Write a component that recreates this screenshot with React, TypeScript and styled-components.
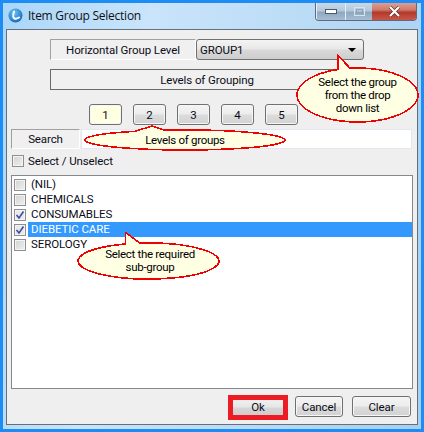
import React from "react";
import styled, { createGlobalStyle } from "styled-components";

const GlobalStyle = createGlobalStyle`
  html, body {
    margin: 0;
    padding: 0;
    background: #fff;
  }
  body {
    font-family: Roboto, "Liberation Sans", Arial, sans-serif;
    font-size: 11.5px;
    letter-spacing: -0.1px;
    color: #0c0c18;
  }
`;

const Stage = styled.div`
  position: relative;
  width: 424px;
  height: 432px;
  overflow: hidden;
`;

const Window = styled.div`
  box-sizing: border-box;
  width: 424px;
  height: 432px;
  display: flex;
  flex-direction: column;
  border: 3px solid #1e8cf5;
  background: linear-gradient(100deg, #a9d6f9 0%, #c9e4fb 30%, #bcdcf6 60%, #a6cff2 100%);
`;

const TitleBar = styled.div`
  position: relative;
  height: 26px;
  display: flex;
  align-items: center;
  gap: 5px;
  padding: 0 0 2px 5px;
  box-sizing: border-box;
  font-family: "Open Sans", "Liberation Sans", sans-serif;
  font-size: 12px;
  letter-spacing: -0.25px;
  color: #111;
`;

const WindowControls = styled.div`
  position: absolute;
  top: 0;
  right: 4px;
  display: flex;
  height: 17px;
  border: 1px solid #5d6b7c;
  border-top: none;
  border-radius: 0 0 4px 4px;
  overflow: hidden;
`;

const ControlButton = styled.div<{ $close?: boolean; $width: number }>`
  width: ${(p) => p.$width}px;
  display: flex;
  align-items: center;
  justify-content: center;
  border-left: ${(p) => (p.$close ? "none" : "1px solid #e4eef8")};
  background: ${(p) =>
    p.$close
      ? "linear-gradient(#dca095 0%, #cf7a6c 40%, #b5392b 55%, #c6574a 100%)"
      : "linear-gradient(#c7d8e8 0%, #b4c8dc 45%, #8ea8c2 55%, #a6bdd3 100%)"};
`;

const Panel = styled.div`
  box-sizing: border-box;
  height: 396px;
  margin: 0 3px;
  display: flex;
  flex-direction: column;
  border: 1px solid #66707a;
  background: #efefef;
`;

const GroupRow = styled.div`
  display: flex;
  margin: 9px 0 0 43px;
  height: 21px;
`;

const FieldLabel = styled.div<{ $width: number }>`
  box-sizing: border-box;
  width: ${(p) => p.$width}px;
  display: flex;
  align-items: center;
  justify-content: center;
  border: 1px solid;
  border-color: #a0a0a0 #fff #fff #a0a0a0;
  background: #f0f0f0;
`;

const Dropdown = styled.div`
  box-sizing: border-box;
  width: 168px;
  display: flex;
  align-items: center;
  justify-content: space-between;
  padding: 0 7px 0 3px;
  border: 1px solid #707070;
  border-radius: 3px;
  background: linear-gradient(#f4f4f4 0%, #e8e8e8 45%, #d8d8d8 55%, #cdcdcd 100%);
`;

const DropArrow = styled.span`
  width: 0;
  height: 0;
  border-left: 4px solid transparent;
  border-right: 4px solid transparent;
  border-top: 4px solid #000;
`;

const LevelsTitle = styled.div`
  box-sizing: border-box;
  width: 314px;
  height: 21px;
  margin: 9px 0 0 43px;
  display: flex;
  align-items: center;
  justify-content: center;
  border: 1px solid #696969;
  background: #f0f0f0;
`;

const LevelRow = styled.div`
  display: flex;
  gap: 11px;
  margin: 14px 0 0 82px;
`;

const PushButton = styled.button<{ $width?: number; $active?: boolean }>`
  box-sizing: border-box;
  width: ${(p) => p.$width ?? 33}px;
  height: 21px;
  padding: 0;
  border: 1px solid #707070;
  border-radius: 3px;
  box-shadow: inset 0 0 0 1px #f6f6f6;
  font-family: inherit;
  font-size: inherit;
  letter-spacing: inherit;
  color: inherit;
  background: ${(p) =>
    p.$active
      ? "#ffffe1"
      : "linear-gradient(#f4f4f4 0%, #ececec 48%, #dcdcdc 52%, #d2d2d2 100%)"};
`;

const SearchRow = styled.div`
  display: flex;
  height: 20px;
  margin: 4px 0 0 4px;
`;

const SearchInput = styled.div`
  box-sizing: border-box;
  width: 331px;
  margin-left: 1px;
  background: #fff;
  border: 1px solid #e2e8f0;
`;

const SelectAllRow = styled.div`
  display: flex;
  align-items: center;
  gap: 4px;
  height: 12px;
  margin: 6px 0 0 5px;
`;

const CheckBox = styled.span<{ $checked?: boolean }>`
  box-sizing: border-box;
  flex: none;
  width: 12px;
  height: 12px;
  display: flex;
  align-items: center;
  justify-content: center;
  border: 1px solid #8e8f8f;
  box-shadow: inset 0 0 0 1px #f4f4f4;
  background: ${(p) => (p.$checked ? "#e8e8ee" : "linear-gradient(135deg, #d2d2d2, #f0f0f0)")};
`;

const ListBox = styled.div`
  box-sizing: border-box;
  width: 402px;
  height: 214px;
  margin: 8px 0 0 4px;
  padding: 1px 0 0 2px;
  border: 1px solid #85888c;
  background: #fff;
`;

const ListRow = styled.div`
  display: flex;
  align-items: center;
  height: 15px;
`;

const ListLabel = styled.div<{ $selected?: boolean }>`
  flex: 1;
  height: 15px;
  line-height: 15px;
  margin-left: 2px;
  padding-left: 3px;
  color: ${(p) => (p.$selected ? "#fff" : "inherit")};
  background: ${(p) => (p.$selected ? "#3399ff" : "transparent")};
`;

const Footer = styled.div`
  display: flex;
  justify-content: flex-end;
  align-items: flex-start;
  gap: 9px;
  height: 25px;
  margin-top: 6px;
  padding-right: 6px;

  button {
    margin-top: 1px;
  }
`;

const OkFrame = styled.div`
  display: flex;
  border: 5px solid #ed1c24;
  margin-right: -2px;
`;

const OkButton = styled.div`
  width: 50px;
  height: 15px;
  line-height: 15px;
  text-align: center;
  background: linear-gradient(#f0f0f0 0%, #e6e6e6 48%, #d6d6d6 52%, #cdcdcd 100%);
`;

const CalloutBox = styled.div<{ $left: number; $top: number; $width: number; $height: number }>`
  position: absolute;
  left: ${(p) => p.$left}px;
  top: ${(p) => p.$top}px;
  width: ${(p) => p.$width}px;
  height: ${(p) => p.$height}px;
  display: flex;
  align-items: center;
  justify-content: center;
  text-align: center;
  line-height: 13px;
  letter-spacing: -0.3px;
  color: #000;

  svg {
    position: absolute;
    left: 0;
    top: 0;
    overflow: visible;
  }
`;

const CalloutText = styled.div<{ $shift?: number }>`
  position: relative;
  padding-left: ${(p) => p.$shift ?? 0}px;
  white-space: pre-line;
`;

// ellipse with a pointed tail going up, coordinates local to the ellipse box
function calloutPath(w: number, h: number, baseL: number, baseR: number, tipX: number, tipY: number) {
  const rx = w / 2;
  const ry = h / 2;
  const yAt = (x: number) => ry - ry * Math.sqrt(1 - ((x - rx) / rx) ** 2);
  return `M${baseR} ${yAt(baseR)} A${rx} ${ry} 0 1 1 ${baseL} ${yAt(baseL)} L${tipX} ${tipY} Z`;
}

interface CalloutProps {
  left: number;
  top: number;
  width: number;
  height: number;
  baseL: number;
  baseR: number;
  tipX: number;
  tipY: number;
  shift?: number;
  children: React.ReactNode;
}

const Callout: React.FC<CalloutProps> = ({ left, top, width, height, baseL, baseR, tipX, tipY, shift, children }) => (
  <CalloutBox $left={left} $top={top} $width={width} $height={height}>
    <svg width={width} height={height}>
      <path
        d={calloutPath(width, height, baseL, baseR, tipX, tipY)}
        fill="#ffffe3"
        stroke="#f00000"
        strokeWidth={1.6}
        shapeRendering="crispEdges"
      />
    </svg>
    <CalloutText $shift={shift}>{children}</CalloutText>
  </CalloutBox>
);

const AppIcon = () => (
  <svg width="15" height="15" viewBox="0 0 15 15">
    <defs>
      <radialGradient id="appIconFill" cx="0.4" cy="0.3" r="0.8">
        <stop offset="0" stopColor="#6cc4f5" />
        <stop offset="1" stopColor="#0a62b8" />
      </radialGradient>
    </defs>
    <circle cx="7.5" cy="7.5" r="7" fill="url(#appIconFill)" />
    <path d="M6 3.5 C5 7 5 10 6.5 10.5 C8 11 9.5 10.5 11 9.5" fill="none" stroke="#fff" strokeWidth="2" strokeLinecap="round" />
  </svg>
);

const CheckMark = () => (
  <svg width="10" height="10" viewBox="0 0 10 10">
    <path d="M1.5 5 L4 8 L8.5 1.5" fill="none" stroke="#3b4f9a" strokeWidth="1.6" />
  </svg>
);

const items = [
  { name: "(NIL)", checked: false },
  { name: "CHEMICALS", checked: false },
  { name: "CONSUMABLES", checked: true },
  { name: "DIEBETIC CARE", checked: true, selected: true },
  { name: "SEROLOGY", checked: false },
];

export default function App() {
  return (
    <Stage>
      <GlobalStyle />
      <Window>
        <TitleBar>
          <AppIcon />
          Item Group Selection
          <WindowControls>
            <ControlButton $width={28}>
              <svg width="12" height="6" viewBox="0 0 12 6">
                <rect x="0.5" y="0.5" width="11" height="4" fill="#fff" stroke="#4a5a6c" />
              </svg>
            </ControlButton>
            <ControlButton $width={26}>
              <svg width="11" height="10" viewBox="0 0 11 10">
                <rect x="0.5" y="0.5" width="10" height="8" fill="none" stroke="#d8e4f0" />
                <rect x="2.5" y="2.5" width="6" height="4" fill="none" stroke="#8ea4ba" />
              </svg>
            </ControlButton>
            <ControlButton $close $width={44}>
              <svg width="13" height="11" viewBox="0 0 13 11">
                <path d="M2 1 L11 10 M11 1 L2 10" stroke="#5a2a24" strokeWidth="3.4" />
                <path d="M2 1 L11 10 M11 1 L2 10" stroke="#fff" strokeWidth="2.2" />
              </svg>
            </ControlButton>
          </WindowControls>
        </TitleBar>
        <Panel>
          <GroupRow>
            <FieldLabel $width={146}>Horizontal Group Level</FieldLabel>
            <Dropdown>
              GROUP1
              <DropArrow />
            </Dropdown>
          </GroupRow>
          <LevelsTitle>Levels of Grouping</LevelsTitle>
          <LevelRow>
            {[1, 2, 3, 4, 5].map((n) => (
              <PushButton key={n} $active={n === 1}>
                {n}
              </PushButton>
            ))}
          </LevelRow>
          <SearchRow>
            <FieldLabel $width={69}>Search</FieldLabel>
            <SearchInput />
          </SearchRow>
          <SelectAllRow>
            <CheckBox />
            Select / Unselect
          </SelectAllRow>
          <ListBox>
            {items.map((item) => (
              <ListRow key={item.name}>
                <CheckBox $checked={item.checked}>{item.checked && <CheckMark />}</CheckBox>
                <ListLabel $selected={item.selected}>{item.name}</ListLabel>
              </ListRow>
            ))}
          </ListBox>
          <Footer>
            <OkFrame>
              <OkButton>Ok</OkButton>
            </OkFrame>
            <PushButton $width={48}>Cancel</PushButton>
            <PushButton $width={59}>Clear</PushButton>
          </Footer>
        </Panel>
      </Window>
      <Callout left={297} top={68} width={121} height={54} baseL={41} baseR={53} tipX={41} tipY={-12.5}>
        {"Select the group\nfrom the drop\ndown list"}
      </Callout>
      <Callout left={85} top={130} width={200} height={20} baseL={50} baseR={80} tipX={67} tipY={-4}>
        Levels of groups
      </Callout>
      <Callout left={78} top={243} width={141} height={36} baseL={47.5} baseR={62} tipX={47.7} tipY={-10.3} shift={3}>
        {"Select the required\nsub-group"}
      </Callout>
    </Stage>
  );
}
